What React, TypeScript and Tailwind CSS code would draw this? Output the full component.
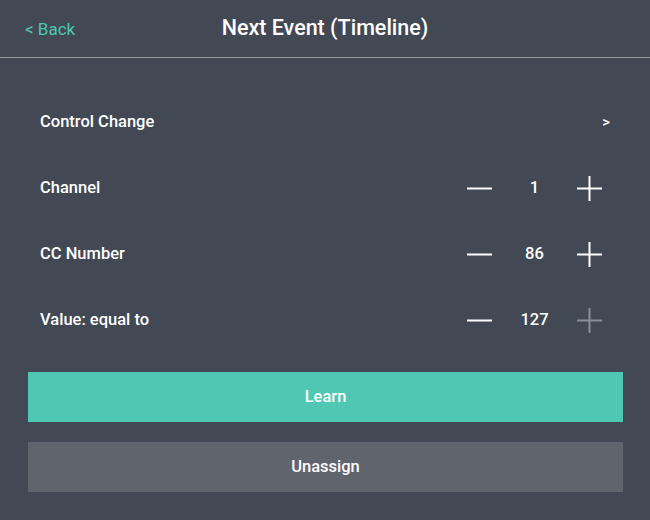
import React from 'react'

const ROWS = [
  { label: 'Channel', value: '1', plusDisabled: false },
  { label: 'CC Number', value: '86', plusDisabled: false },
  { label: 'Value: equal to', value: '127', plusDisabled: true },
]

function Minus() {
  return (
    <svg width="25" height="25" viewBox="0 0 25 25">
      <rect x="0" y="11.5" width="25" height="2" fill="#ffffff" />
    </svg>
  )
}

function Plus({ disabled }: { disabled: boolean }) {
  const c = disabled ? '#8b8e95' : '#ffffff'
  return (
    <svg width="25" height="25" viewBox="0 0 25 25">
      <rect x="0" y="11.5" width="25" height="2" fill={c} />
      <rect x="11.5" y="0" width="2" height="25" fill={c} />
    </svg>
  )
}

export default function App() {
  return (
    <div
      className="w-[650px] h-[520px] bg-[#424854] text-white overflow-hidden"
      style={{ fontFamily: 'Roboto, "Liberation Sans", sans-serif' }}
    >
      {/* header */}
      <div className="relative h-[58px] flex items-center justify-center border-b border-[#9a9ca2]">
        <span className="absolute left-[25px] top-[17px] text-[17px] text-[#4fc7b2]">&lt; Back</span>
        <span className="text-[21.5px] font-medium">Next Event (Timeline)</span>
      </div>

      <div className="pl-[28px] pr-[27px] pt-[31px]">
        <div className="h-[66px] flex items-center pl-3 pr-[13px] text-[16.5px] font-medium">
          <span className="flex-1">Control Change</span>
          <span className="text-[15px]">&gt;</span>
        </div>

        {ROWS.map(r => (
          <div key={r.label} className="h-[66px] flex items-center pl-3 pr-[21px] text-[16.5px] font-medium">
            <span className="flex-1">{r.label}</span>
            <Minus />
            <span className="w-[85px] text-center">{r.value}</span>
            <Plus disabled={r.plusDisabled} />
          </div>
        ))}

        <div className="mt-[19px] flex flex-col gap-[20px]">
          <button className="h-[50px] w-full bg-[#4fc7b2] text-[16.5px] font-medium text-white">Learn</button>
          <button className="h-[50px] w-full bg-[#60646d] text-[16.5px] font-medium text-white">Unassign</button>
        </div>
      </div>
    </div>
  )
}
